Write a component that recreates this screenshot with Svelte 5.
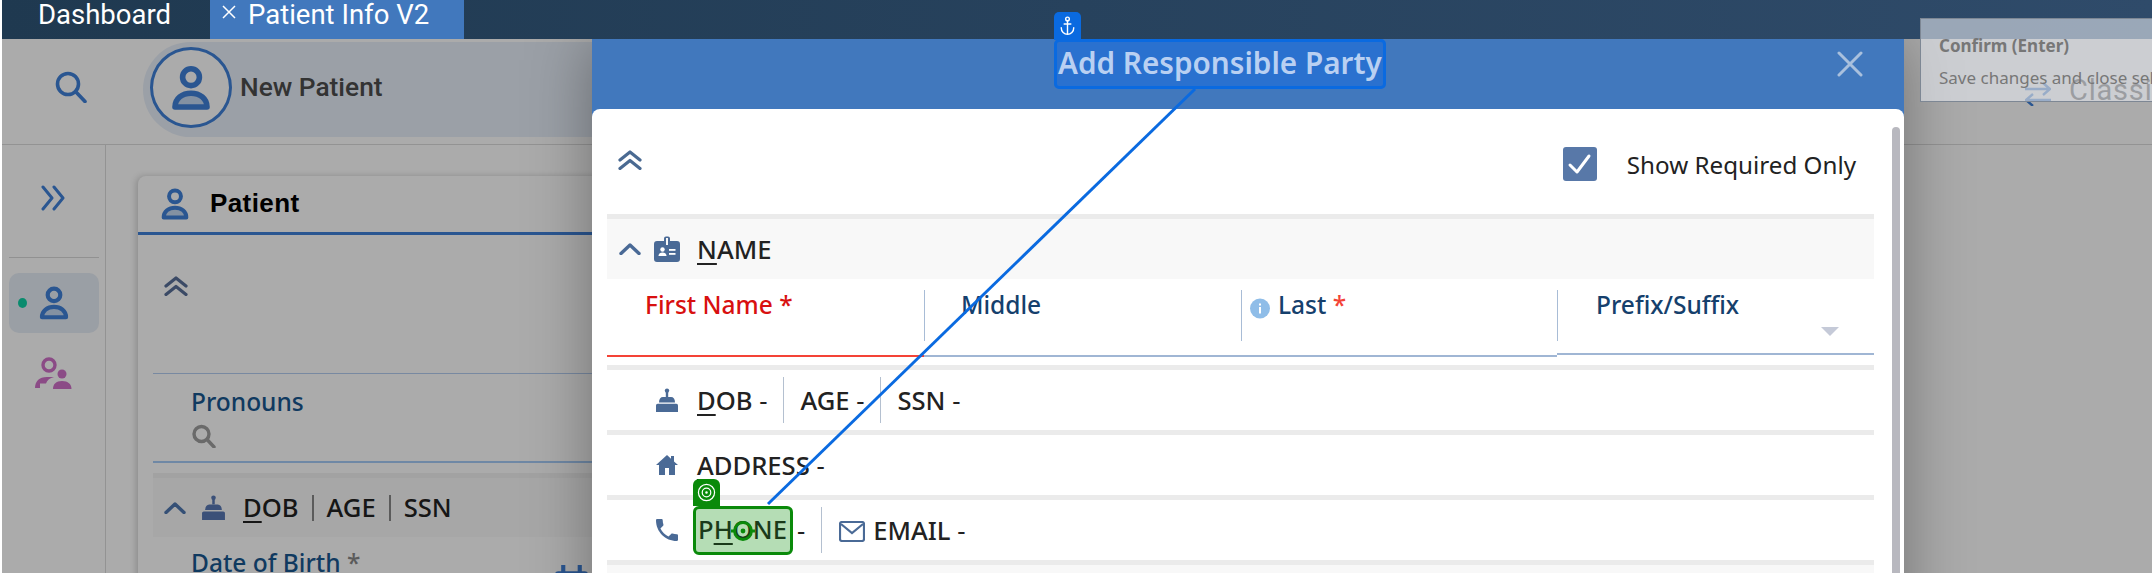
<script lang="ts">
  const person = 'M4 21.5C4 17.2 7.6 14.6 12 14.6s8 2.6 8 6.9z';
</script>

{#snippet personIcon(cls)}
  <svg class={cls} viewBox="0 0 24 24">
    <circle cx="12" cy="6.6" r="4.2" fill="none" stroke="currentColor" stroke-width="2.8" />
    <path d={person} class="tint" stroke="currentColor" stroke-width="2.8" stroke-linejoin="round" />
  </svg>
{/snippet}

{#snippet chevronsUp(cls)}
  <svg class={cls} viewBox="0 0 24 20" fill="none" stroke="currentColor" stroke-width="3.2" stroke-linecap="round" stroke-linejoin="round">
    <path d="M2 10 12 2l10 8M2 18.5 12 10.5l10 8" />
  </svg>
{/snippet}

{#snippet cake(cls)}
  <svg class={cls} viewBox="0 0 22 24" fill="currentColor">
    <circle cx="11" cy="2.6" r="2.2" />
    <rect x="9.8" y="3" width="2.4" height="6" />
    <path d="M3 14.5c0-3.500 1.500-5.500 4-5.500h8c2.500 0 4 2 4 5.500z" />
    <path d="M0 17.500c0-1 .8-1.700 1.700-1.700h18.600c.9 0 1.700.7 1.700 1.700V24H0z" />
  </svg>
{/snippet}

<div class="page">
  <nav class="tabbar">
    <div class="tab">Dashboard</div>
    <div class="tab active">
      <svg class="tab-x" viewBox="0 0 14 14" fill="none" stroke="currentColor" stroke-width="1.5"><path d="M1 1l12 12M13 1 1 13" /></svg>
      <span>Patient Info V2</span>
    </div>
  </nav>

  <header class="topbar">
    <svg class="search" viewBox="0 0 32 32" fill="none" stroke="currentColor" stroke-width="3.6" stroke-linecap="round"><circle cx="13" cy="13" r="10.5" /><path d="M20.5 20.5 30 30.5" /></svg>
    <div class="pill">
      <div class="avatar">{@render personIcon('avatar-icon')}</div>
      <span class="pill-name">New Patient</span>
    </div>
    <div class="classic">
      <svg class="swap" viewBox="0 0 26 24" fill="none" stroke="currentColor" stroke-width="2.4"><path d="M0 7h25M18 1l7 6-7 6" /><path d="M26 18H1M8 12l-7 6 7 6" /></svg>
      <span>Classic</span>
    </div>
  </header>

  <div class="content">
    <aside class="sidebar">
      <svg class="expand" viewBox="0 0 24 26" fill="none" stroke="currentColor" stroke-width="3" stroke-linecap="round" stroke-linejoin="round"><path d="M2 2l9 11-9 11M13 2l9 11-9 11" /></svg>
      <div class="side-rule"></div>
      <div class="side-item">
        <span class="dot"></span>
        {@render personIcon('side-person')}
      </div>
      <svg class="group" viewBox="0 0 38 32" fill="none">
        <circle cx="15" cy="8" r="6" stroke="currentColor" stroke-width="3.4" />
        <path d="M1 31c0-6.500 4-11 12-11h7c-4 1-7 3-8 6.500H6V31z" fill="currentColor" />
        <circle cx="28" cy="17" r="4.5" fill="currentColor" />
        <path d="M19 32c0-5 3-8 9-8s9.500 3 9.500 8z" fill="currentColor" />
      </svg>
    </aside>

    <main class="main">
      <section class="card">
        <div class="card-head">
          {@render personIcon('card-person')}
          <span class="card-title">Patient</span>
        </div>
        <div class="card-body">
          <div class="card-top">{@render chevronsUp('card-chev')}</div>
          <div class="pronouns">
            <div class="pg-label">Pronouns</div>
            <svg class="pg-search" viewBox="0 0 24 24" fill="none" stroke="currentColor" stroke-width="3.4" stroke-linecap="round"><circle cx="10" cy="10" r="7.5" /><path d="M16 16l6.500 7" /></svg>
          </div>
          <div class="pg-head">
            <svg class="pg-chev" viewBox="0 0 22 12" fill="none" stroke="currentColor" stroke-width="3.4" stroke-linecap="round" stroke-linejoin="round"><path d="M2 10.500 11 2l9 8.500" /></svg>
            {@render cake('pg-cake')}
            <span class="heading"><u>D</u>OB</span>
            <span class="pg-pipe"></span>
            <span class="heading">AGE</span>
            <span class="pg-pipe"></span>
            <span class="heading">SSN</span>
          </div>
          <div class="pg-dob">
            <span class="pg-label">Date of Birth <i>*</i></span>
            <svg class="pg-cal" viewBox="0 0 32 32" fill="currentColor"><rect x="0" y="6" width="32" height="26" rx="3" /><rect x="6" y="0" width="4" height="10" /><rect x="22" y="0" width="4" height="10" /></svg>
          </div>
        </div>
      </section>
    </main>
  </div>

  <div class="backdrop"></div>

  <div class="modal">
    <div class="modal-head">
      <h2 class="modal-title">Add Responsible Party</h2>
      <svg class="modal-x" viewBox="0 0 26 26" fill="none" stroke="currentColor" stroke-width="3" stroke-linecap="round"><path d="M2 2l22 22M24 2 2 24" /></svg>
    </div>
    <div class="modal-body">
      <div class="modal-top">
        {@render chevronsUp('modal-chev')}
        <label class="required">
          <span class="checkbox">
            <svg viewBox="0 0 34 34" fill="none" stroke="#fff" stroke-width="3" stroke-linecap="round" stroke-linejoin="round"><path d="M7 18l7 7L26 9" /></svg>
          </span>
          <span>Show Required Only</span>
        </label>
      </div>

      <div class="sec-head">
        <svg class="chev" viewBox="0 0 22 12" fill="none" stroke="currentColor" stroke-width="3.4" stroke-linecap="round" stroke-linejoin="round"><path d="M2 10.500 11 2l9 8.500" /></svg>
        <svg class="idcard" viewBox="0 0 26 26">
          <path d="M3 5h7V2.500a2 2 0 0 1 2-2h2a2 2 0 0 1 2 2V5h7a3 3 0 0 1 3 3v15a3 3 0 0 1-3 3H3a3 3 0 0 1-3-3V8a3 3 0 0 1 3-3z" fill="currentColor" />
          <rect x="12" y="2" width="2" height="7" fill="#f8f8f8" />
          <circle cx="8.5" cy="13.5" r="2.2" fill="#fff" />
          <path d="M4.500 20c0-2.500 1.800-3.500 4-3.500s4 1 4 3.500z" fill="#fff" />
          <rect x="15" y="13" width="6.5" height="1.8" fill="#fff" />
          <rect x="15" y="17" width="6.5" height="1.8" fill="#fff" />
        </svg>
        <span class="heading"><u>N</u>AME</span>
      </div>

      <div class="fields">
        <div class="field invalid"><div class="field-in"><span class="flabel">First Name *</span></div></div>
        <div class="field"><div class="field-in divided"><span class="flabel middle">Middle</span></div></div>
        <div class="field"><div class="field-in divided last">
          <svg class="info" viewBox="0 0 20 20"><circle cx="10" cy="10" r="10" fill="#8fbde8" /><rect x="9" y="8.5" width="2" height="6.5" fill="#fff" /><rect x="9" y="5" width="2" height="2" fill="#fff" /></svg>
          <span class="flabel">Last <i>*</i></span>
        </div></div>
        <div class="field raised"><div class="field-in divided">
          <span class="flabel prefix">Prefix/Suffix</span>
          <span class="caret"></span>
        </div></div>
      </div>

      <div class="row">
        {@render cake('row-icon cake-icon')}
        <span class="heading"><u>D</u>OB <b>-</b></span>
        <span class="sep"></span>
        <span class="heading">AGE <b>-</b></span>
        <span class="sep"></span>
        <span class="heading">SSN <b>-</b></span>
      </div>

      <div class="row">
        <svg class="row-icon" viewBox="0 0 22 20" fill="currentColor"><path d="M11 0 0 10h3v10h6v-7h4v7h6V10h3l-4-3.600V1h-3v2.700z" /></svg>
        <span class="heading"><u>A</u>DDRESS <b>-</b></span>
      </div>

      <div class="row">
        <svg class="row-icon" viewBox="3 3 18 18" fill="currentColor"><path d="M6.620 10.790c1.440 2.830 3.760 5.140 6.590 6.590l2.200-2.200c.27-.27.67-.36 1.020-.24 1.120.37 2.330.57 3.570.57.55 0 1 .45 1 1V20c0 .55-.45 1-1 1-9.390 0-17-7.610-17-17 0-.55.45-1 1-1h3.500c.55 0 1 .45 1 1 0 1.250.2 2.450.57 3.570.11.35.03.74-.25 1.020l-2.200 2.200z" /></svg>
        <span class="phone-box heading">
          <span class="tag-green">
            <svg viewBox="0 0 20 20" fill="none" stroke="#fff" stroke-width="1.3"><circle cx="10" cy="10" r="8.5" /><circle cx="10" cy="10" r="4.5" /><circle cx="10" cy="10" r="1.3" fill="#fff" stroke="none" /></svg>
          </span>
          P<u>H</u>ONE
          <svg class="target" viewBox="0 0 26 26" fill="none" stroke="#0a8a0a" stroke-width="2.8"><circle cx="13" cy="13" r="8.500" /><path d="M1 13h3M22 13h3" /><circle cx="13" cy="13" r="2.400" fill="#0a8a0a" stroke="none" /></svg>
        </span>
        <span class="heading dash">-</span>
        <span class="sep"></span>
        <svg class="mail" viewBox="0 0 26 21" fill="none" stroke="currentColor" stroke-width="2.2"><rect x="1" y="1" width="24" height="19" rx="2" /><path d="M2 3l11 9 11-9" /></svg>
        <span class="heading">EMAIL <b>-</b></span>
      </div>

      <div class="row-end"></div>
    </div>
    <div class="scrollbar"></div>
  </div>

  <svg class="link" viewBox="0 0 2152 573"><line x1="1195" y1="89" x2="768" y2="504" stroke="#0a6ae0" stroke-width="3" /></svg>

  <div class="anchor-box"></div>
  <div class="tag-blue">
    <svg viewBox="0 0 18 24" fill="none" stroke="#fff" stroke-width="1.7" stroke-linecap="round"><circle cx="9" cy="3.5" r="2.2" /><path d="M9 6v16M5 9.500h8M1.500 14c0 5 3.500 8 7.500 8s7.500-3 7.500-8" /></svg>
  </div>

  <div class="tooltip">
    <div class="tip-title">Confirm (Enter)</div>
    <div class="tip-text">Save changes and close selected panel</div>
  </div>
</div>

<style>
  :global(body) {
    margin: 0;
    background: #fff;
  }

  .page {
    position: relative;
    width: 2152px;
    height: 573px;
    padding-left: 2px;
    box-sizing: border-box;
    overflow: hidden;
    display: flex;
    flex-direction: column;
    font-family: "Noto Sans", sans-serif;
    background: #fff;
  }

  .tabbar {
    position: relative;
    z-index: 3;
    flex: none;
    height: 39px;
    display: flex;
    background: linear-gradient(90deg, #1f3950, #2f4b6a);
    font-family: Roboto, sans-serif;
    font-size: 27.5px;
    color: #fff;
  }

  .tab {
    width: 208px;
    padding-left: 36px;
    box-sizing: border-box;
    line-height: 30px;
  }

  .tab.active {
    width: 254px;
    padding-left: 12px;
    background: #4178bd;
    display: flex;
    align-items: flex-start;
  }

  .tab-x {
    width: 14px;
    height: 14px;
    margin: 5px 12px 0 0;
  }

  .topbar {
    flex: none;
    height: 106px;
    display: flex;
    align-items: flex-start;
    border-bottom: 1px solid #dcdcdc;
    box-sizing: border-box;
  }

  .search {
    width: 32px;
    height: 32px;
    margin: 32px 56px 0 53px;
    color: #3f80d8;
  }

  .pill {
    width: 700px;
    height: 95px;
    margin-top: 3px;
    padding: 5px 0 0 7px;
    box-sizing: border-box;
    display: flex;
    align-items: flex-start;
    gap: 8px;
    border-radius: 48px 0 0 48px;
    background: #e8eff9;
  }

  .avatar {
    width: 82px;
    height: 81px;
    box-sizing: border-box;
    border: 3px solid #3f80d8;
    border-radius: 50%;
    background: #fff;
    display: flex;
    align-items: center;
    justify-content: center;
    color: #3f80d8;
  }

  .tint {
    fill: #c4d8f2;
  }

  :global(.avatar-icon) {
    width: 48px;
    height: 48px;
  }

  .pill-name {
    font-family: Roboto, sans-serif;
    font-weight: 500;
    font-size: 26.3px;
    line-height: 81px;
    color: #4d4d4d;
  }

  .classic {
    flex: none;
    margin-left: auto;
    width: 127px;
    height: 100%;
    display: flex;
    gap: 18px;
    align-items: flex-start;
    font-family: Roboto, sans-serif;
    font-size: 29px;
    letter-spacing: .8px;
    color: #4a4a4a;
    white-space: nowrap;
    overflow: hidden;
  }

  .classic span {
    line-height: 36px;
    margin-top: 33px;
  }

  .swap {
    flex: none;
    width: 26px;
    height: 24px;
    margin-top: 43px;
    color: #3f80d8;
  }

  .content {
    flex: 1;
    min-height: 0;
    display: flex;
  }

  .sidebar {
    flex: none;
    width: 104px;
    box-sizing: border-box;
    border-right: 1px solid #dcdcdc;
    display: flex;
    flex-direction: column;
    align-items: center;
    padding-top: 40px;
  }

  .expand {
    width: 24px;
    height: 26px;
    margin-left: -2px;
    color: #3f80d8;
  }

  .side-rule {
    width: 90px;
    height: 1px;
    margin-top: 46px;
    background: #d8d8d8;
    flex: none;
  }

  .side-item {
    position: relative;
    width: 90px;
    height: 60px;
    margin-top: 15px;
    border-radius: 10px;
    background: #e6edf6;
    display: flex;
    align-items: center;
    justify-content: center;
    box-sizing: border-box;
    color: #3f80d8;
  }

  .dot {
    position: absolute;
    left: 9px;
    top: 25px;
    width: 9px;
    height: 10px;
    border-radius: 50%;
    background: #0fd0a5;
  }

  :global(.side-person) {
    width: 36px;
    height: 36px;
  }

  .group {
    width: 38px;
    height: 32px;
    margin-top: 24px;
    margin-left: -2px;
    color: #cf70c8;
  }

  .main {
    flex: 1;
    min-width: 0;
    padding: 31px 300px 0 32px;
  }

  .card {
    height: 600px;
    border-radius: 8px 8px 0 0;
    background: #fff;
    box-shadow: -2px 0 6px rgba(0, 0, 0, .18);
  }

  .card-head {
    height: 59px;
    box-sizing: border-box;
    border-bottom: 3px solid #3f80d8;
    padding-left: 20px;
    display: flex;
    align-items: center;
    gap: 18px;
    color: #3f80d8;
  }

  :global(.card-person) {
    width: 34px;
    height: 34px;
  }

  .card-title {
    font-family: "Liberation Sans", sans-serif;
    font-weight: 700;
    font-size: 26px;
    letter-spacing: .4px;
    line-height: 30px;
    margin-top: -3px;
    color: #000;
  }

  .card-body {
    padding-left: 15px;
  }

  .card-top {
    height: 139px;
    box-sizing: border-box;
    border-bottom: 1px solid #b4cdf0;
    padding: 41px 0 0 11px;
  }

  :global(.card-chev) {
    display: block;
    width: 24px;
    height: 20px;
    color: #586f98;
  }

  .pronouns {
    height: 89px;
    box-sizing: border-box;
    border-bottom: 2px solid #a6cbf7;
    padding: 12px 0 0 38px;
  }

  .pg-label {
    font-size: 24.5px;
    line-height: 32px;
    font-weight: 500;
    color: #18578f;
  }

  .pg-label i {
    font-style: normal;
    color: #888;
  }

  .pg-search {
    display: block;
    width: 25px;
    height: 24px;
    margin-top: 6px;
    color: #9e9e9e;
  }

  .pg-head {
    margin-top: 10px;
    height: 64px;
    box-sizing: border-box;
    border-top: 5px solid #f2f2f2;
    background: #f9f9f9;
    display: flex;
    align-items: center;
    padding-left: 11px;
  }

  .pg-chev {
    width: 22px;
    height: 12px;
    color: #4f78b0;
    margin-right: 16px;
  }

  :global(.pg-cake) {
    width: 23px;
    height: 25px;
    color: #5878b4;
    margin-right: 18px;
  }

  .pg-pipe {
    width: 2px;
    height: 26px;
    margin: 0 13px;
    background: #888;
  }

  .pg-dob {
    position: relative;
    padding: 10px 0 0 38px;
  }

  .pg-cal {
    position: absolute;
    left: 402px;
    top: 28px;
    width: 33px;
    height: 33px;
    color: #3f80d8;
  }

  .backdrop {
    position: absolute;
    inset: 39px 0 0 2px;
    background: rgba(0, 0, 0, .33);
  }

  .modal {
    position: absolute;
    left: 592px;
    top: 39px;
    width: 1312px;
    height: 600px;
    background: #4178bd;
    box-shadow: 0 0 60px rgba(0, 0, 0, .35);
  }

  .modal-head {
    height: 70px;
    position: relative;
  }

  .modal-title {
    margin: 0;
    position: absolute;
    left: 466px;
    top: 1px;
    font-size: 29.7px;
    line-height: 46px;
    font-weight: 600;
    color: #b9d0f2;
    white-space: nowrap;
    z-index: 2;
  }

  .modal-x {
    position: absolute;
    left: 1245px;
    top: 12px;
    width: 26px;
    height: 26px;
    color: #a9c0dd;
  }

  .modal-body {
    height: 530px;
    background: #fff;
    border-radius: 8px 8px 0 0;
    padding: 0 30px 0 15px;
    display: flex;
    flex-direction: column;
  }

  .modal-top {
    flex: none;
    height: 105px;
    display: flex;
    justify-content: space-between;
    align-items: flex-start;
    padding: 41px 18px 0 11px;
    box-sizing: border-box;
  }

  :global(.modal-chev) {
    width: 24px;
    height: 20px;
    color: #4a6a92;
  }

  .required {
    display: flex;
    align-items: center;
    gap: 30px;
    margin-top: -3px;
    font-size: 24.2px;
    color: #222;
  }

  .checkbox {
    width: 34px;
    height: 34px;
    border-radius: 3px;
    background: #5878a8;
    display: block;
  }

  .checkbox svg {
    display: block;
  }

  .sec-head {
    flex: none;
    height: 65px;
    box-sizing: border-box;
    border-top: 5px solid #ebebeb;
    background: #f8f8f8;
    display: flex;
    align-items: center;
    padding-left: 12px;
    color: #4a6a96;
  }

  .chev {
    width: 22px;
    height: 12px;
    margin-right: 13px;
  }

  .idcard {
    width: 26px;
    height: 26px;
    margin-right: 17px;
  }

  .heading {
    font-size: 25.6px;
    font-weight: 500;
    color: #222;
    white-space: nowrap;
  }

  .heading u {
    text-decoration-thickness: 2px;
    text-underline-offset: 4px;
  }

  .heading b {
    font-weight: 400;
    margin-left: 0;
  }

  .fields {
    flex: none;
    height: 86px;
    display: grid;
    grid-template-columns: 317px 317px 316px 317px;
    align-items: start;
  }

  .field {
    height: 78px;
    box-sizing: border-box;
    border-bottom: 2px solid #a0b6d4;
    padding-top: 11px;
  }

  .field.invalid {
    border-bottom-color: #f44336;
  }

  .field.raised {
    height: 76px;
  }

  .field-in {
    position: relative;
    height: 51px;
    box-sizing: border-box;
  }

  .divided {
    border-left: 1px solid #a8bcd6;
  }

  .flabel {
    display: block;
    font-size: 24.5px;
    font-weight: 500;
    line-height: 30px;
    color: #15406c;
    white-space: nowrap;
  }

  .invalid .flabel {
    color: #d81010;
    padding-left: 38px;
  }

  .middle {
    padding-left: 36px;
  }

  .last {
    display: flex;
    align-items: flex-start;
    padding-left: 8px;
  }

  .info {
    width: 20px;
    height: 21px;
    margin: 8px 8px 0 0;
    flex: none;
  }

  .flabel i {
    font-style: normal;
    color: #f44336;
  }

  .prefix {
    padding-left: 38px;
  }

  .caret {
    position: absolute;
    right: 35px;
    top: 37px;
    width: 0;
    height: 0;
    border-left: 9px solid transparent;
    border-right: 9px solid transparent;
    border-top: 9px solid #c5cad8;
  }

  .row {
    flex: none;
    height: 65px;
    box-sizing: border-box;
    border-top: 5px solid #ebebeb;
    display: flex;
    align-items: center;
    padding-left: 49px;
    color: #4a6a96;
  }

  :global(.row-icon) {
    flex: none;
    width: 22px;
    height: 22px;
    margin-right: 19px;
  }

  :global(.cake-icon) {
    height: 24px;
  }

  .sep {
    flex: none;
    width: 1px;
    height: 46px;
    margin: 0 16px;
    background: #b4c0d0;
  }

  .phone-box {
    position: relative;
    margin-left: -4px;
    width: 100px;
    height: 49px;
    box-sizing: border-box;
    border: 3px solid #0a8a0a;
    border-radius: 6px;
    background: #b5ddb5;
    color: #1a3a1a;
    display: block;
    line-height: 42px;
    padding-left: 2px;
  }

  .tag-green {
    position: absolute;
    left: -3px;
    top: -30px;
    width: 27px;
    height: 27px;
    background: #0a8a0a;
    border-radius: 6px 6px 0 0;
    display: flex;
    align-items: center;
    justify-content: center;
  }

  .tag-green svg {
    width: 19px;
    height: 19px;
  }

  .target {
    position: absolute;
    left: 34px;
    top: 9px;
    width: 26px;
    height: 26px;
  }

  .dash {
    margin-left: 4px;
    font-weight: 400;
  }

  .mail {
    flex: none;
    width: 26px;
    height: 21px;
    margin: 2px 8px 0 1px;
  }

  .row-end {
    flex: 1;
    border-top: 5px solid #ebebeb;
    background: #f8f8f8;
  }

  .scrollbar {
    position: absolute;
    left: 1300px;
    top: 88px;
    width: 8px;
    height: 500px;
    border-radius: 4px;
    background: #b8b8bf;
  }

  .link {
    position: absolute;
    inset: 0;
    width: 2152px;
    height: 573px;
    z-index: 4;
    pointer-events: none;
  }

  .anchor-box {
    position: absolute;
    left: 1054px;
    top: 39px;
    width: 332px;
    height: 50px;
    box-sizing: border-box;
    border: 3px solid #0a6ae0;
    border-radius: 5px;
    background: #2a71cf;
    z-index: 1;
  }

  .tag-blue {
    position: absolute;
    left: 1054px;
    top: 12px;
    width: 27px;
    height: 28px;
    background: #0a6ae0;
    border-radius: 5px 5px 0 0;
    display: flex;
    align-items: center;
    justify-content: center;
    z-index: 4;
  }

  .tag-blue svg {
    width: 17px;
    height: 20px;
  }

  .tooltip {
    position: absolute;
    left: 1920px;
    top: 18px;
    width: 300px;
    height: 84px;
    box-sizing: border-box;
    border: 1px solid #7d8794;
    background: rgba(227, 230, 236, .6);
    padding: 15px 0 0 18px;
    z-index: 5;
    color: #777;
  }

  .tip-title {
    font-size: 17px;
    font-weight: 700;
    line-height: 24px;
  }

  .tip-text {
    margin-top: 8px;
    font-size: 17px;
    line-height: 24px;
    white-space: nowrap;
  }
</style>
